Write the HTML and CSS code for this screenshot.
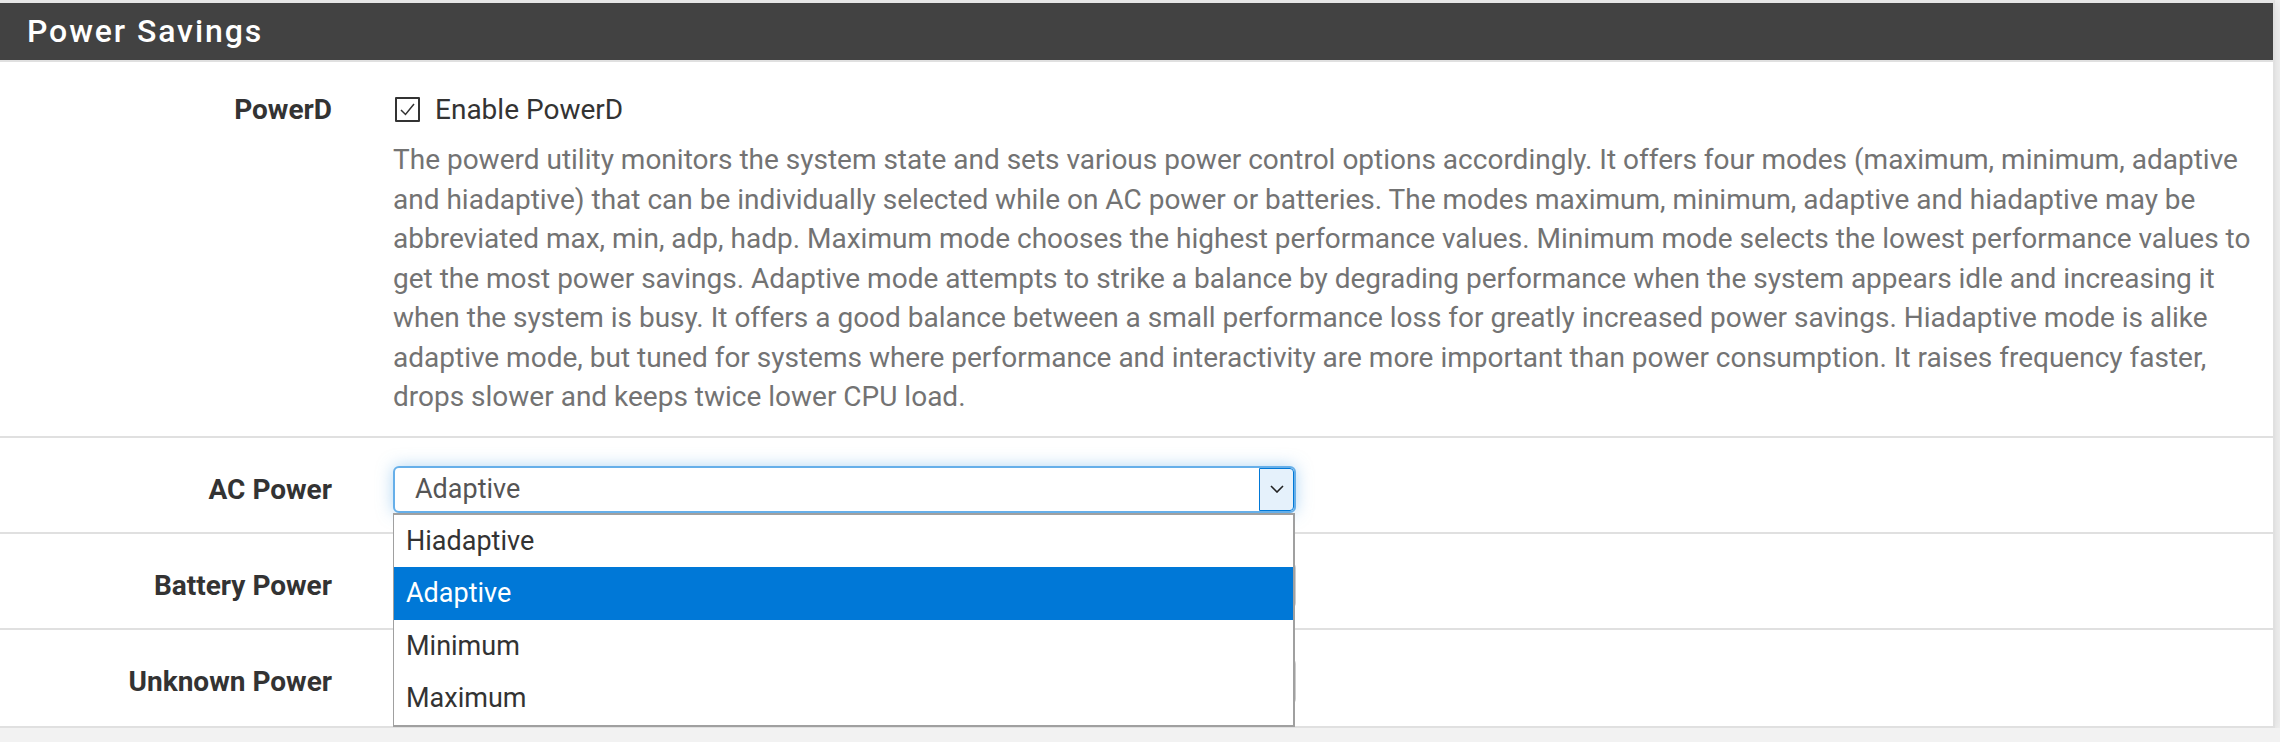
FILE: index.html
```html
<!DOCTYPE html>
<html lang="en">
<head>
  <meta charset="UTF-8">
  <title>Power Savings</title>
  <link rel="stylesheet" href="styles.css">
</head>
<body>
  <div class="panel">
    <div class="panel-heading">
      <h2 class="panel-title">Power Savings</h2>
    </div>

    <div class="form-row first">
      <label class="row-label">PowerD</label>
      <div class="row-control">
        <div class="check-line">
          <span class="checkbox">
            <svg width="21" height="21" viewBox="0 0 21 21"><path d="M4 11 L8.5 15.5 L17 5" fill="none" stroke="#333" stroke-width="1.5"/></svg>
          </span>
          <span>Enable PowerD</span>
        </div>
        <p class="help-block">The powerd utility monitors the system state and sets various power control options accordingly. It offers four modes (maximum, minimum, adaptive and hiadaptive) that can be individually selected while on AC power or batteries. The modes maximum, minimum, adaptive and hiadaptive may be abbreviated max, min, adp, hadp. Maximum mode chooses the highest performance values. Minimum mode selects the lowest performance values to get the most power savings. Adaptive mode attempts to strike a balance by degrading performance when the system appears idle and increasing it when the system is busy. It offers a good balance between a small performance loss for greatly increased power savings. Hiadaptive mode is alike adaptive mode, but tuned for systems where performance and interactivity are more important than power consumption. It raises frequency faster, drops slower and keeps twice lower CPU load.</p>
      </div>
    </div>

    <div class="form-row">
      <label class="row-label">AC Power</label>
      <div class="row-control">
        <div class="select-wrap">
          <div class="select focused">
            <span class="select-value">Adaptive</span>
            <span class="select-arrow">
              <svg width="14" height="8" viewBox="0 0 14 8"><path d="M1 1 L7 7 L13 1" fill="none" stroke="#222" stroke-width="1.6"/></svg>
            </span>
          </div>
          <ul class="dropdown">
            <li>Hiadaptive</li>
            <li class="active">Adaptive</li>
            <li>Minimum</li>
            <li>Maximum</li>
          </ul>
        </div>
      </div>
    </div>

    <div class="form-row">
      <label class="row-label">Battery Power</label>
      <div class="row-control">
        <div class="select"></div>
      </div>
    </div>

    <div class="form-row last">
      <label class="row-label">Unknown Power</label>
      <div class="row-control">
        <div class="select"></div>
      </div>
    </div>
  </div>
</body>
</html>
```

FILE: styles.css
```css
body {
  margin: 0;
  font-family: Roboto, "Liberation Sans", sans-serif;
  font-size: 28px;
  color: #333;
  background-color: #f2f2f2;
}
.panel {
  width: 2273px;
  background-color: #fff;
  border-top: 3px solid #e6e6e6;
  border-right: 2px solid #e0e0e0;
  border-bottom: 2px solid #e0e0e0;
  box-shadow: 0 3px 12px rgba(0, 0, 0, 0.12);
}
.panel-heading {
  background-color: #424242;
  height: 57px;
  border-bottom: 2px solid #e0e0e0;
}
.panel-title {
  margin: 0;
  padding-left: 27px;
  line-height: 57px;
  font-size: 32px;
  font-weight: 500;
  letter-spacing: 1.9px;
  color: #fff;
}
.form-row {
  display: grid;
  grid-template-columns: 393px 1fr;
  align-items: center;
  height: 96px;
  box-sizing: border-box;
  padding: 28px 0 21px;
  border-bottom: 2px solid #e0e0e0;
}
.form-row.first {
  align-items: start;
  height: auto;
  padding: 28px 0 19px;
}
.form-row.last {
  border-bottom: none;
}
.row-label {
  padding-right: 61px;
  text-align: right;
  font-weight: 700;
  line-height: 39px;
}
.row-control {
  padding-right: 15px;
}
.check-line {
  display: flex;
  align-items: center;
  height: 39px;
}
.checkbox {
  display: inline-flex;
  align-items: center;
  justify-content: center;
  width: 21px;
  height: 21px;
  margin: 0 15px 0 2px;
  border: 2px solid #333;
  border-radius: 1px;
}
.help-block {
  margin: 11px 0 0;
  line-height: 39.5px;
  color: #737373;
}
.select-wrap {
  position: relative;
  width: 903px;
}
.select {
  display: flex;
  width: 903px;
  height: 47px;
  box-sizing: border-box;
  border: 2px solid #ccc;
  border-radius: 6px;
  background-color: #fff;
  color: #555;
}
.select.focused {
  border-color: #66afe9;
  box-shadow: 0 0 16px rgba(102, 175, 233, 0.5);
}
.select-value {
  flex: 1;
  padding-left: 20px;
  line-height: 43px;
  font-size: 27px;
}
.select-arrow {
  display: flex;
  align-items: center;
  justify-content: center;
  width: 33px;
  border: 1px solid #0078d7;
  border-radius: 0 4px 4px 0;
  background-color: #e5f1fb;
}
.dropdown {
  position: absolute;
  top: 47px;
  left: 0;
  z-index: 2;
  width: 902px;
  box-sizing: border-box;
  margin: 0;
  padding: 0;
  list-style: none;
  background-color: #fff;
  border: 2px solid #a0a0a0;
  border-left-width: 1px;
}
.dropdown li {
  height: 52.5px;
  line-height: 52.5px;
  padding-left: 12px;
  font-size: 27px;
  color: #333;
}
.dropdown li.active {
  background-color: #0078d7;
  color: #fff;
}
```
